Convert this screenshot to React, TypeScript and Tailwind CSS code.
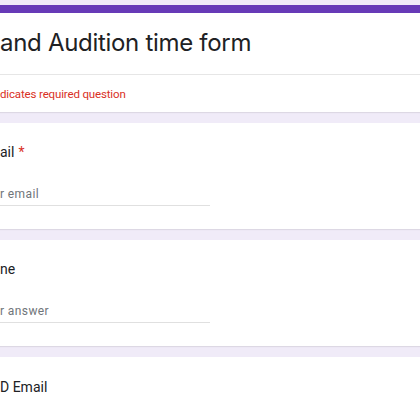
export default function App() {
  return (
    <div className="h-[420px] w-[420px] overflow-hidden bg-[#f0ebf8] pt-[5px] font-['Roboto',sans-serif]">
      <div className="flex flex-col gap-[11px]">
        {/* header card */}
        <div className="bg-white shadow-[0_1px_1px_rgba(0,0,0,0.08)]">
          <div className="h-2 bg-[#673ab7]" />
          <div className="h-[62px] border-b border-[#e6e6e6] pt-[16px]">
            <h1 className="font-['Inter',sans-serif] text-[24px] leading-[28px] tracking-[-0.3px] text-[#202124]">
              and Audition time form
            </h1>
          </div>
          <div className="h-[37px] pt-[11px] text-[11.5px] leading-[16px] tracking-[-0.15px] text-[#d93025]">
            dicates required question
          </div>
        </div>

        <Question label="ail" required placeholder="r email" />
        <Question label="ne" placeholder="r answer" />

        <div className="h-[80px] bg-white pt-[20px]">
          <div className="text-[14px] leading-[20px] text-[#202124]">D Email</div>
        </div>
      </div>
    </div>
  );
}

function Question({ label, required, placeholder }: { label: string; required?: boolean; placeholder: string }) {
  return (
    <div className="h-[106px] bg-white pt-[19px] shadow-[0_1px_1px_rgba(0,0,0,0.08)]">
      <div className="text-[14px] leading-[20px] text-[#202124]">
        {label}
        {required && <span className="ml-1 text-[#d93025]">*</span>}
      </div>
      <div className="mt-[24px] w-[210px] border-b border-[#e0e0e0] pb-[3px] text-[12px] leading-[16px] tracking-[0.4px] text-[#70757a]">
        {placeholder}
      </div>
    </div>
  );
}
